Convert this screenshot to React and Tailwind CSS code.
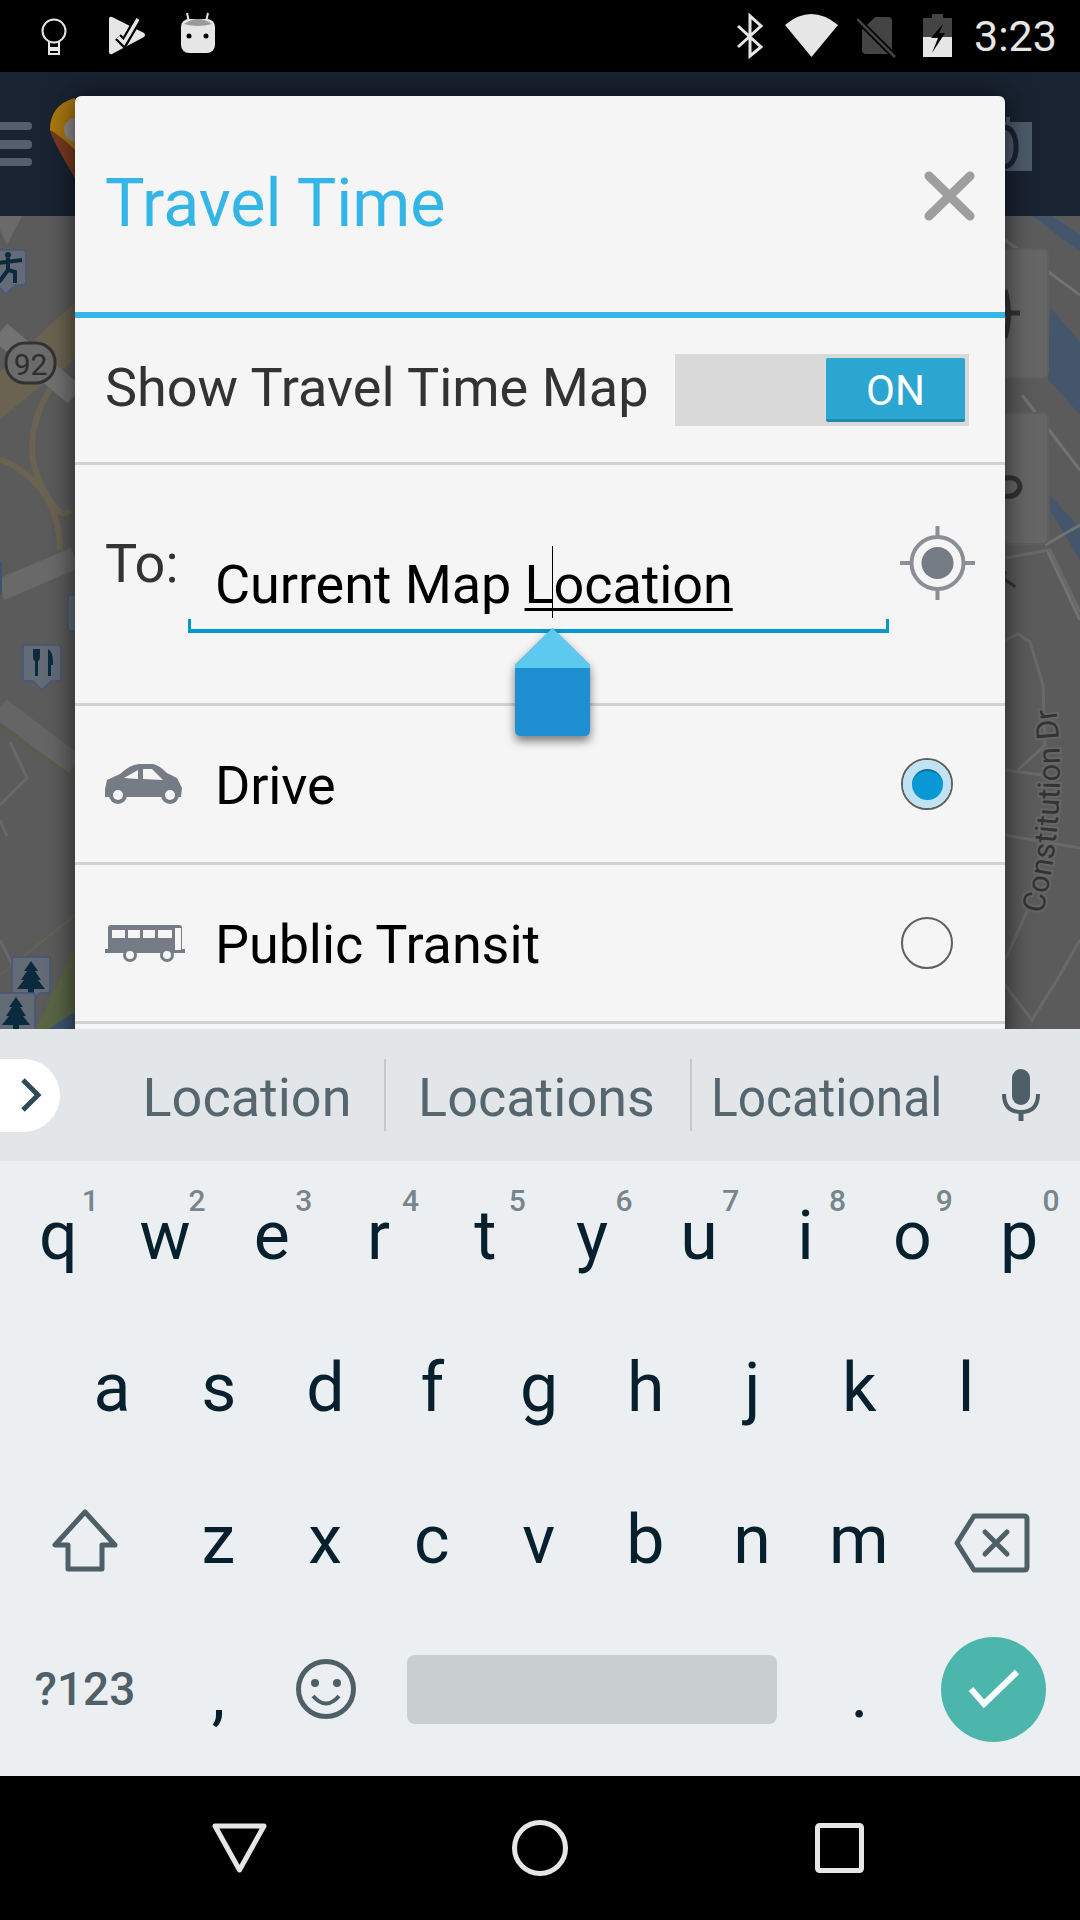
const topRow = [
  ["q", "1"],
  ["w", "2"],
  ["e", "3"],
  ["r", "4"],
  ["t", "5"],
  ["y", "6"],
  ["u", "7"],
  ["i", "8"],
  ["o", "9"],
  ["p", "0"],
];
const homeRow = ["a", "s", "d", "f", "g", "h", "j", "k", "l"];
const bottomRow = ["z", "x", "c", "v", "b", "n", "m"];

function MapPin({ x, y, w = 39, h = 37, children }) {
  const tipX = x + w / 2;
  return (
    <g>
      <path
        d={`M${x + 3} ${y}H${x + w - 3}Q${x + w} ${y} ${x + w} ${y + 3}V${y + h - 3}Q${x + w} ${y + h} ${x + w - 3} ${y + h}H${tipX + 9}L${tipX} ${y + h + 9}L${tipX - 9} ${y + h}H${x + 3}Q${x} ${y + h} ${x} ${y + h - 3}V${y + 3}Q${x} ${y} ${x + 3} ${y}Z`}
        fill="#626b76"
        stroke="#46587a"
        strokeWidth="1.5"
      />
      {children}
    </g>
  );
}

function Tree({ x, y }) {
  return (
    <path
      d={`M${x} ${y}l7 10h-3l6 9h-3l7 9h-11v6h-6v-6h-11l7-9h-3l6-9h-3z`}
      fill="#0c2a3e"
    />
  );
}

function MapLayer() {
  return (
    <svg viewBox="0 216 1080 813" className="block h-full w-full">
      <rect x="0" y="216" width="1080" height="813" fill="#5b5b5b" />

      <path d="M0 419L75 359V302L0 372Z" fill="#6b6352" />
      <path d="M0 332L75 395" stroke="#727272" strokeWidth="22" fill="none" />
      <path d="M50 389Q20 440 40 482T70 510M0 459Q30 472 45 495T60 550" stroke="#6b6352" strokeWidth="6" fill="none" />
      <path d="M0 590L75 558" stroke="#696969" strokeWidth="22" fill="none" />
      <path d="M0 562h2v33h-2z" fill="#3d5470" />
      <path d="M0 708L75 765" stroke="#656565" strokeWidth="22" fill="none" />
      <path d="M0 726L75 778" stroke="#5f5b48" strokeWidth="2" fill="none" />
      <path d="M10 742L27 778L0 805M0 820L7 836" stroke="#686868" strokeWidth="3" fill="none" />
      <path d="M0 975L75 915" stroke="#656250" strokeWidth="2" fill="none" />
      <path d="M0 940L14 968" stroke="#686868" strokeWidth="3" fill="none" />
      <path d="M36 1029L75 948V1029Z" fill="#5a6545" />
      <path d="M48 1029L75 1012V1029Z" fill="#3d5470" />

      <path d="M0 216H22L7 245L0 230Z" fill="#6a6a6a" />
      <MapPin x={-14} y={250} w={40} h={35}>
        <circle cx="8" cy="255" r="3" fill="#0c2a3e" />
        <path d="M-3 263L22 260M8 258V270L-1 282M8 270L15 272V283" stroke="#0c2a3e" strokeWidth="4" fill="none" />
      </MapPin>

      <rect x="6" y="343" width="49" height="40" rx="19" fill="#6b6b6b" stroke="#333333" strokeWidth="3" />
      <text x="30.5" y="375" textAnchor="middle" fontSize="30" fill="#2e2e2e" fontFamily="Roboto, sans-serif">
        92
      </text>

      <MapPin x={68} y={595} w={30} h={36} />
      <MapPin x={23} y={645} w={38} h={36}>
        <path d="M33 649v8q0 3 2 4v15h3v-15q2-1 2-4v-8M48 649q5 2 5 14v2h-2v11h-3z" fill="#0c2a3e" />
      </MapPin>
      <MapPin x={12} y={957} w={38} h={36}>
        <Tree x={31} y={961} />
      </MapPin>
      <MapPin x={-4} y={993} w={39} h={45}>
        <Tree x={16} y={997} />
      </MapPin>

      <path d="M1033 216H1053L1080 235V252Z" fill="#44566b" />
      <path d="M1050 307L1080 342V415L1048 379Z" fill="#44566b" />
      <path d="M1050 495L1080 529V560L1050 510Z" fill="#44566b" />
      <path d="M1005 240L1080 295M1022 395L1080 470M1045 545L1080 525M1048 552L1080 620" stroke="#727272" strokeWidth="3" fill="none" />

      <rect x="990" y="249" width="58" height="129" rx="5" fill="#666666" stroke="#5f5f5f" strokeWidth="2" />
      <rect x="990" y="413" width="58" height="131" rx="5" fill="#666666" stroke="#5f5f5f" strokeWidth="2" />
      <path d="M1005 290Q1012 313 1005 338M1005 313H1020" stroke="#333333" strokeWidth="5" fill="none" />
      <path d="M1005 478Q1020 476 1020 488Q1016 498 1005 496" stroke="#333333" strokeWidth="5" fill="none" />

      <path d="M1005 558L1050 550L1080 612M1005 640L1018 634L1030 642L1043 685L1045 745L1018 770M1005 770L1050 776M1005 835L1080 848M1005 960L1030 905M1005 985L1032 1020L1060 975L1080 940" stroke="#696969" strokeWidth="3" fill="none" />

      <text x="0" y="0" transform="translate(1013 590) rotate(-55)" fontSize="34" fill="#333333" fontFamily="Roboto, sans-serif">
        r
      </text>
      <path id="street-curve" d="M1043 914Q1069 800 1055 700L1047 640" fill="none" />
      <text fontSize="31" fill="#333333" stroke="#666666" strokeWidth="4" paintOrder="stroke" fontFamily="Roboto, sans-serif">
        <textPath href="#street-curve">Constitution Dr</textPath>
      </text>
    </svg>
  );
}

function StatusBar() {
  return (
    <div className="flex h-[72px] items-center bg-black pl-[41px] text-[#e6e6e6]">
      <svg viewBox="41 0 26 72" className="h-[72px] w-[26px]">
        <circle cx="54" cy="31" r="11.5" fill="none" stroke="#e6e6e6" strokeWidth="2" />
        <path d="M49 42V54H59V42" fill="none" stroke="#e6e6e6" strokeWidth="2" />
        <rect x="49" y="47" width="10" height="4" fill="#e6e6e6" />
      </svg>
      <svg viewBox="109 0 38 72" className="ml-[42px] h-[72px] w-[38px]">
        <path d="M109 19Q109 16 112 17L144 33Q146 35 144 37L112 54Q109 55 109 52Z" fill="#e6e6e6" />
        <path d="M118 37L124 43L138 19" fill="none" stroke="#000000" strokeWidth="8" />
        <path d="M118 37L124 43L138 19" fill="none" stroke="#e6e6e6" strokeWidth="3.5" />
      </svg>
      <svg viewBox="181 0 35 72" className="ml-[34px] h-[72px] w-[35px]">
        <path d="M189 22L187 13M206 22L208 13" stroke="#e6e6e6" strokeWidth="2" />
        <rect x="181" y="19" width="34" height="34" rx="8" fill="#e6e6e6" />
        <path d="M184 24Q198 14 212 24Q198 28 184 24Z" fill="#9a9a9a" />
        <circle cx="189" cy="36" r="2.5" fill="#000000" />
        <circle cx="206" cy="36" r="2.5" fill="#000000" />
      </svg>
      <svg viewBox="736 0 27 72" className="ml-[520px] h-[72px] w-[27px]">
        <path d="M738 26L761 47L750 56V16L761 26L738 47" fill="none" stroke="#e6e6e6" strokeWidth="3" />
      </svg>
      <svg viewBox="785 0 53 72" className="ml-[22px] h-[72px] w-[53px]">
        <path d="M785 25Q811 3 838 25L811.5 57Z" fill="#e6e6e6" />
      </svg>
      <svg viewBox="857 0 39 72" className="ml-[19px] h-[72px] w-[39px]">
        <path d="M875 17H888Q892 17 892 21V50Q892 54 888 54H866Q862 54 862 50V30Z" fill="#444444" />
        <path d="M857 19L895 57" stroke="#000000" strokeWidth="6" />
        <path d="M857 19L895 57" stroke="#444444" strokeWidth="2.5" />
      </svg>
      <svg viewBox="923 0 29 72" className="ml-[27px] h-[72px] w-[29px]">
        <path d="M932 14H943V18H952V37H923V18H932Z" fill="#444444" />
        <rect x="923" y="37" width="29" height="20" fill="#e6e6e6" />
        <path d="M943 24L931 38H938L932 53L945 33H939Z" fill="#000000" />
      </svg>
      <span className="ml-[22px] text-[43px] leading-none">3:23</span>
    </div>
  );
}

function AppBar() {
  return (
    <div className="h-[144px] bg-[#192331]">
      <svg viewBox="0 72 1080 144" className="block h-full w-full">
        <rect x="-8" y="122" width="40" height="8" rx="4" fill="#535f6d" />
        <rect x="-8" y="140" width="40" height="9" rx="4" fill="#535f6d" />
        <rect x="-8" y="158" width="40" height="8" rx="4" fill="#535f6d" />
        <path d="M75 98Q50 105 50 130Q52 140 75 178Z" fill="#7a3a20" />
        <path d="M75 98Q50 105 50 130Q60 135 75 150Z" fill="#a87810" />
        <circle cx="76" cy="130" r="12" fill="#8d8d8d" />
        <path d="M1000 122H1006V117H1010V122H1032V171H1000Z" fill="#4d5a6a" />
        <path d="M1005 127Q1016 130 1016 147Q1016 164 1005 167" fill="none" stroke="#192331" strokeWidth="5" />
      </svg>
    </div>
  );
}

function CarIcon() {
  return (
    <svg viewBox="0 0 78 40" className="h-[40px] w-[78px]">
      <path d="M0 31V25L2 16L15 10Q26 0 34 0H48Q54 1 62 9L72 14L77 24L76 33H0Z" fill="#757c85" />
      <path d="M19 14L33 6V15ZM38 5H47L58 16L38 15Z" fill="#f5f5f5" />
      <circle cx="13" cy="31" r="9" fill="#757c85" />
      <circle cx="13" cy="31" r="5" fill="#f5f5f5" />
      <circle cx="65" cy="31" r="9" fill="#757c85" />
      <circle cx="65" cy="31" r="5" fill="#f5f5f5" />
    </svg>
  );
}

function BusIcon() {
  return (
    <svg viewBox="0 0 80 37" className="h-[37px] w-[80px]">
      <path d="M6 0H74Q77 0 77 3V24H80V28H0V24H3V3Q3 0 6 0Z" fill="#757c85" />
      <path d="M7 5H20V13H7ZM23 5H35V13H23ZM38 5H50V13H38ZM53 5H67V13H53ZM70 3H76V25H70Z" fill="#f5f5f5" />
      <circle cx="25" cy="30" r="7" fill="#757c85" />
      <circle cx="25" cy="30" r="4" fill="#f5f5f5" />
      <circle cx="62" cy="30" r="7" fill="#757c85" />
      <circle cx="62" cy="30" r="4" fill="#f5f5f5" />
    </svg>
  );
}

function Radio({ checked }) {
  return (
    <div className="ml-auto mr-[52px] flex h-[52px] w-[52px] items-center justify-center rounded-full border-2 border-[#5f5f5f] bg-[#f5f5f5]">
      {checked && (
        <div className="flex h-[48px] w-[48px] items-center justify-center rounded-full bg-[#bfe3f3]">
          <div className="h-[31px] w-[31px] rounded-full border-t-2 border-[#0b6f9e] bg-[#0a97d6]" />
        </div>
      )}
    </div>
  );
}

function Divider() {
  return <div className="h-[3px] bg-[#d2d2d2]" />;
}

function TravelTimeDialog() {
  return (
    <div className="absolute left-[75px] top-[96px] h-[960px] w-[930px] rounded-t-[6px] bg-[#f5f5f5] shadow-[0_0_28px_rgba(0,0,0,0.65)]">
      <div className="flex h-[216px] items-center justify-between pl-[30px] pr-[30px]">
        <h1 className="text-[66.2px] leading-none text-[#33b5e5]">Travel Time</h1>
        <svg viewBox="0 0 51 50" className="-mt-[16px] h-[50px] w-[51px]">
          <path d="M5 5L46 45M46 5L5 45" stroke="#9e9e9e" strokeWidth="9" strokeLinecap="round" />
        </svg>
      </div>
      <div className="h-[6px] bg-[#33b5e5]" />

      <div className="flex h-[144px] items-center pl-[30px] pr-[36px]">
        <span className="pb-[4px] text-[54px] leading-none text-[#333333]">Show Travel Time Map</span>
        <div className="ml-auto flex h-[72px] w-[294px] justify-end bg-[#d9d9d9] p-[4px] pl-0">
          <div className="flex h-[64px] w-[139px] items-center justify-center rounded-[2px] border-b-[3px] border-[#2289ad] bg-[#2ba6d1] pt-[4px] text-[42px] leading-none text-white">
            ON
          </div>
        </div>
      </div>
      <Divider />

      <div className="flex h-[238px] items-start pl-[30px]">
        <span className="mt-[72px] w-[83px] text-[54px] leading-none text-[#333333]">To:</span>
        <div className="relative mt-[93px] w-[701px]">
          <div className="whitespace-nowrap pl-[27px] text-[54px] leading-none tracking-[-0.1px] text-black">
            Current Map{" "}
            <span className="underline decoration-[3px] underline-offset-[5px]">Location</span>
          </div>
          <div className="mt-[7px] h-[14px] border-x-[3px] border-b-[4px] border-[#0099cc]" />
          <div className="absolute left-[364px] top-[-12px] h-[72px] w-px bg-black" />
          <svg viewBox="0 0 75 108" className="absolute left-[327px] top-[70px] z-[1] h-[108px] w-[75px] drop-shadow-[0_5px_5px_rgba(0,0,0,0.5)]">
            <path d="M37.5 0L75 37V102Q75 108 69 108H6Q0 108 0 102V37Z" fill="#1e90d2" />
            <path d="M37.5 0L75 37V40H0V37Z" fill="#5ec9ef" />
          </svg>
        </div>
        <svg viewBox="0 0 75 74" className="ml-[11px] mt-[61px] h-[74px] w-[75px]">
          <circle cx="37.5" cy="37" r="26" fill="none" stroke="#8a8f96" strokeWidth="4" />
          <circle cx="37.5" cy="37" r="16" fill="#757c85" />
          <path d="M37.5 0V11M37.5 63V74M0 37H11M64 37H75" stroke="#8a8f96" strokeWidth="4" />
        </svg>
      </div>
      <Divider />

      <div className="flex h-[156px] items-center pl-[30px]">
        <CarIcon />
        <span className="ml-[32px] pt-[3px] text-[54px] leading-none tracking-[-0.2px] text-black">Drive</span>
        <Radio checked />
      </div>
      <Divider />

      <div className="flex h-[156px] items-center pl-[30px]">
        <BusIcon />
        <span className="ml-[30px] pt-[3px] text-[54px] leading-none tracking-[-0.1px] text-black">Public Transit</span>
        <Radio />
      </div>
      <Divider />
    </div>
  );
}

function SuggestionStrip() {
  return (
    <div className="flex h-[132px] items-center bg-[#e3e6e9] text-[54px] leading-none text-[#56666f]">
      <div className="flex h-[73px] w-[60px] items-center rounded-r-full bg-white pl-[20px]">
        <svg viewBox="0 0 22 36" className="h-[36px] w-[22px]">
          <path d="M3 3L18 18L3 33" fill="none" stroke="#2f4a58" strokeWidth="5" />
        </svg>
      </div>
      <div className="ml-[50px] flex h-[72px] w-[276px] items-center justify-center border-r-2 border-[#c5c9cc] pt-[5px]">
        Location
      </div>
      <div className="flex h-[72px] w-[306px] items-center justify-center border-r-2 border-[#c5c9cc] pr-[3px] pt-[5px]">
        Locations
      </div>
      <div className="flex h-[72px] w-[248px] items-center pl-[19px] pt-[5px]">
        <span className="origin-left scale-x-[0.92] whitespace-nowrap">Locational</span>
      </div>
      <svg viewBox="0 0 38 52" className="ml-[62px] h-[52px] w-[38px]">
        <rect x="10" y="0" width="18" height="36" rx="9" fill="#4f5f68" />
        <path d="M2 25Q2 43 19 43Q36 43 36 25" fill="none" stroke="#4f5f68" strokeWidth="4" />
        <path d="M19 43V52" stroke="#4f5f68" strokeWidth="5" />
      </svg>
    </div>
  );
}

function LetterKey({ label, hint }) {
  return (
    <div className="relative flex h-[152px] w-[106.75px] items-center justify-center pb-[2px] text-[68px] leading-none text-[#06202e]">
      {label}
      {hint && (
        <span className="absolute right-[13px] top-[25px] text-[30px] font-medium leading-none text-[#78858c]">
          {hint}
        </span>
      )}
    </div>
  );
}

function Keyboard() {
  return (
    <div className="relative z-10 bg-[#eceff1]">
      <SuggestionStrip />
      <div className="h-[615px]">
        <div className="flex pl-[5px]">
          {topRow.map(([label, hint]) => (
            <LetterKey key={label} label={label} hint={hint} />
          ))}
        </div>
        <div className="flex pl-[58.6px]">
          {homeRow.map((label) => (
            <LetterKey key={label} label={label} />
          ))}
        </div>
        <div className="flex pl-[5px]">
          <div className="flex h-[152px] w-[160px] items-center justify-center">
            <svg viewBox="0 0 68 66" className="h-[66px] w-[68px]">
              <path d="M34 4L4 37H17V61H51V37H64Z" fill="none" stroke="#4f5f68" strokeWidth="5" strokeLinejoin="round" />
            </svg>
          </div>
          {bottomRow.map((label) => (
            <LetterKey key={label} label={label} />
          ))}
          <div className="flex h-[152px] w-[158px] items-center justify-center pt-[4px]">
            <svg viewBox="0 0 76 60" className="ml-[1px] h-[60px] w-[76px]">
              <path d="M20 3H70Q73 3 73 6V54Q73 57 70 57H20L3 30Z" fill="none" stroke="#4f5f68" strokeWidth="5" strokeLinejoin="round" />
              <path d="M31 19L53 41M53 19L31 41" stroke="#4f5f68" strokeWidth="5" strokeLinecap="round" />
            </svg>
          </div>
        </div>
        <div className="flex h-[144px] items-center pl-[5px]">
          <div className="w-[160px] text-center text-[46px] font-medium leading-none text-[#4f5f68]">?123</div>
          <div className="w-[107px] pt-[10px] text-center text-[68px] leading-none text-[#06202e]">,</div>
          <div className="flex w-[107px] justify-center">
            <svg viewBox="0 0 60 60" className="h-[60px] w-[60px]">
              <circle cx="30" cy="30" r="27.5" fill="none" stroke="#4f5f68" strokeWidth="5" />
              <circle cx="19" cy="24" r="4" fill="#4f5f68" />
              <circle cx="41" cy="24" r="4" fill="#4f5f68" />
              <path d="M17 37Q30 52 43 37" fill="none" stroke="#4f5f68" strokeWidth="4" />
            </svg>
          </div>
          <div className="ml-[28px] h-[69px] w-[370px] rounded-[8px] bg-[#c9ced1]" />
          <div className="ml-[29px] w-[107px] pt-[10px] text-center text-[68px] leading-none text-[#06202e]">.</div>
          <div className="ml-[28px] flex h-[105px] w-[105px] items-center justify-center rounded-full bg-[#4db6ac]">
            <svg viewBox="0 0 52 40" className="h-[40px] w-[52px]">
              <path d="M3 20L16 35L49 3" fill="none" stroke="#ffffff" strokeWidth="6" />
            </svg>
          </div>
        </div>
      </div>
    </div>
  );
}

function NavBar() {
  return (
    <div className="relative z-10 flex h-[144px] items-center bg-black pl-[212px]">
      <svg viewBox="0 0 55 50" className="h-[50px] w-[55px]">
        <path d="M3 3H52L27.5 47Z" fill="none" stroke="#e6e6e6" strokeWidth="5" strokeLinejoin="round" />
      </svg>
      <svg viewBox="0 0 56 56" className="ml-[245px] h-[56px] w-[56px]">
        <circle cx="28" cy="28" r="25.5" fill="none" stroke="#e6e6e6" strokeWidth="5" />
      </svg>
      <svg viewBox="0 0 49 50" className="ml-[247px] h-[50px] w-[49px]">
        <rect x="2.5" y="2.5" width="44" height="45" rx="2" fill="none" stroke="#e6e6e6" strokeWidth="5" />
      </svg>
    </div>
  );
}

export default function App() {
  return (
    <div className="relative flex h-[1920px] w-[1080px] flex-col overflow-hidden bg-black font-[Roboto,sans-serif]">
      <StatusBar />
      <AppBar />
      <div className="h-[813px]">
        <MapLayer />
      </div>
      <TravelTimeDialog />
      <Keyboard />
      <NavBar />
    </div>
  );
}
